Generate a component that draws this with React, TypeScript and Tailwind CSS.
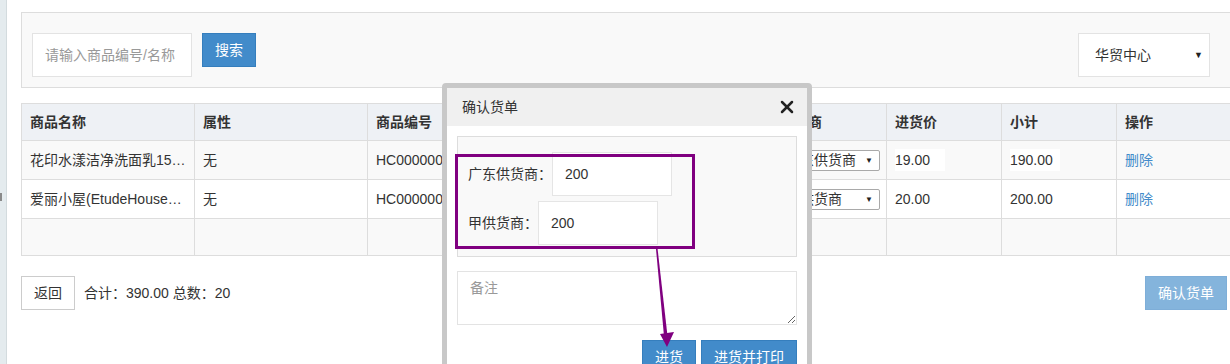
import React from "react";
import { X } from "lucide-react";

const cols = [173, 173, 173, 115, 116, 115, 115, 115, 115];

const headers = ["商品名称", "属性", "商品编号", "单位", "进货数量", "供货商", "进货价", "小计", "操作"];

type Row = {
  name: string;
  attr: string;
  code: string;
  unit: string;
  qty: string;
  supplier: string;
  price: string;
  total: string;
};

const rows: Row[] = [
  {
    name: "花印水漾洁净洗面乳150ml",
    attr: "无",
    code: "HC0000002",
    unit: "个",
    qty: "10",
    supplier: "广东供货商",
    price: "19.00",
    total: "190.00",
  },
  {
    name: "爱丽小屋(EtudeHouse)玫瑰洗面奶",
    attr: "无",
    code: "HC0000001",
    unit: "个",
    qty: "10",
    supplier: "甲供货商",
    price: "20.00",
    total: "200.00",
  },
];

const SupplierSelect: React.FC<{ value: string }> = ({ value }) => (
  <span className="inline-flex items-center justify-between w-[100px] h-[21px] border border-[#a9a9a9] rounded-[2px] bg-white pl-[5px] pr-[6px] leading-[19px]">
    <span>{value}</span>
    <span className="text-[8px] text-[#222]">▼</span>
  </span>
);

const PriceBox: React.FC<{ value: string }> = ({ value }) => (
  <span className="inline-flex items-center w-[50px] h-[22px] bg-white">{value}</span>
);

const App: React.FC = () => {
  return (
    <div className="relative flex w-[1230px] h-[364px] overflow-hidden bg-white text-[14px] leading-[20px] text-[#333] font-['Liberation_Sans','Noto_Sans_CJK_SC',sans-serif]">
      {/* left strip */}
      <div className="relative w-[7px] shrink-0 bg-[#e4ebee] border-r border-[#d3dbde]">
        <div className="absolute left-0 top-[193px] w-[2px] h-[8px] bg-[#8a8a8a]" />
      </div>

      <div className="w-[1224px] shrink-0 pl-[14px] pt-[12px]">
        {/* search panel */}
        <div className="flex items-start justify-between w-[1210px] h-[76px] border border-[#ddd] bg-[#f9f9f9] pt-[20px] pl-[10px] pr-[20px]">
          <div className="flex items-start gap-[10px]">
            <div className="flex items-center w-[160px] h-[44px] border border-[#e3e3e3] bg-white pl-[12px] text-[#999]">
              请输入商品编号/名称
            </div>
            <button className="w-[54px] h-[34px] bg-[#428bca] border border-[#357ebd] text-white">搜索</button>
          </div>
          <div className="flex items-center justify-between w-[132px] h-[44px] border border-[#e3e3e3] bg-white pl-[16px] pr-[6px]">
            <span>华贸中心</span>
            <span className="text-[9px] text-[#222]">▼</span>
          </div>
        </div>

        {/* table */}
        <table className="mt-[15px] w-[1210px] table-fixed border-collapse">
          <colgroup>
            {cols.map((w, i) => (
              <col key={i} style={{ width: w }} />
            ))}
          </colgroup>
          <thead>
            <tr className="h-[37px] bg-[#eef1f5]">
              {headers.map((h) => (
                <th key={h} className="border border-[#ddd] px-[8px] text-left font-bold align-middle">
                  {h}
                </th>
              ))}
            </tr>
          </thead>
          <tbody>
            {rows.map((r, i) => (
              <tr key={r.code} className={i % 2 === 0 ? "h-[39px] bg-[#f9f9f9]" : "h-[39px] bg-white"}>
                <td className="border border-[#ddd] px-[8px] align-middle">
                  <div className="truncate">{r.name}</div>
                </td>
                <td className="border border-[#ddd] px-[8px] align-middle">{r.attr}</td>
                <td className="border border-[#ddd] px-[8px] align-middle">{r.code}</td>
                <td className="border border-[#ddd] px-[8px] align-middle">{r.unit}</td>
                <td className="border border-[#ddd] px-[8px] align-middle">{r.qty}</td>
                <td className="border border-[#ddd] px-[8px] align-middle">
                  <SupplierSelect value={r.supplier} />
                </td>
                <td className="border border-[#ddd] px-[8px] align-middle">
                  <PriceBox value={r.price} />
                </td>
                <td className="border border-[#ddd] px-[8px] align-middle">
                  <PriceBox value={r.total} />
                </td>
                <td className="border border-[#ddd] px-[8px] align-middle">
                  <a href="#" className="text-[#428bca]">删除</a>
                </td>
              </tr>
            ))}
            <tr className="h-[37px] bg-[#f9f9f9]">
              {headers.map((h) => (
                <td key={h} className="border border-[#ddd]" />
              ))}
            </tr>
          </tbody>
        </table>

        {/* footer */}
        <div className="mt-[20px] flex items-center justify-between w-[1210px]">
          <div className="flex items-center">
            <button className="w-[54px] h-[34px] border border-[#ccc] bg-white">返回</button>
            <span className="ml-[9px]">合计：390.00 总数：20</span>
          </div>
          <button className="mr-[4px] w-[82px] h-[34px] bg-[#84b4dc] border border-[#7eaed8] text-white">确认货单</button>
        </div>
      </div>

      {/* modal */}
      <div className="absolute left-[442px] top-[83px] w-[370px] h-[300px] border-[5px] border-[#c8c8c8] rounded-[4px] bg-white">
        <div className="flex items-center justify-between h-[38px] bg-[#f0f0f0] pl-[15px] pr-[10px]">
          <span>确认货单</span>
          <X size={20} strokeWidth={3} className="text-[#222]" />
        </div>
        <div className="px-[10px] pt-[10px]">
          <div className="w-[340px] border border-[#ddd] bg-[#f9f9f9] pt-[15px] pl-[10px] pb-[11px]">
            <div className="flex items-center">
              <span>广东供货商：</span>
              <div className="flex items-center w-[120px] h-[44px] border border-[#e5e5e5] bg-white pl-[12px]">200</div>
            </div>
            <div className="mt-[5px] flex items-center">
              <span>甲供货商：</span>
              <div className="flex items-center w-[120px] h-[44px] border border-[#e5e5e5] bg-white pl-[12px]">200</div>
            </div>
          </div>
          <textarea
            placeholder="备注"
            className="mt-[14px] block w-[340px] h-[54px] border border-[#e3e3e3] bg-white px-[12px] pt-[6px] placeholder:text-[#999] outline-none"
          />
          <div className="mt-[15px] flex justify-end gap-[5px] w-[340px]">
            <button className="w-[54px] h-[34px] bg-[#428bca] border border-[#357ebd] text-white">进货</button>
            <button className="w-[96px] h-[34px] bg-[#428bca] border border-[#357ebd] text-white">进货并打印</button>
          </div>
        </div>
      </div>

      {/* annotation */}
      <div className="absolute left-[455px] top-[154px] w-[240px] h-[95px] border-[3px] border-[#800080]" />
      <svg className="absolute left-0 top-0 pointer-events-none" width="1230" height="364">
        <polygon points="656,249 657.6,249 667.5,336 664,336" fill="#800080" />
        <polygon points="660,334 674,332 667,347" fill="#800080" />
      </svg>
    </div>
  );
};

export default App;
